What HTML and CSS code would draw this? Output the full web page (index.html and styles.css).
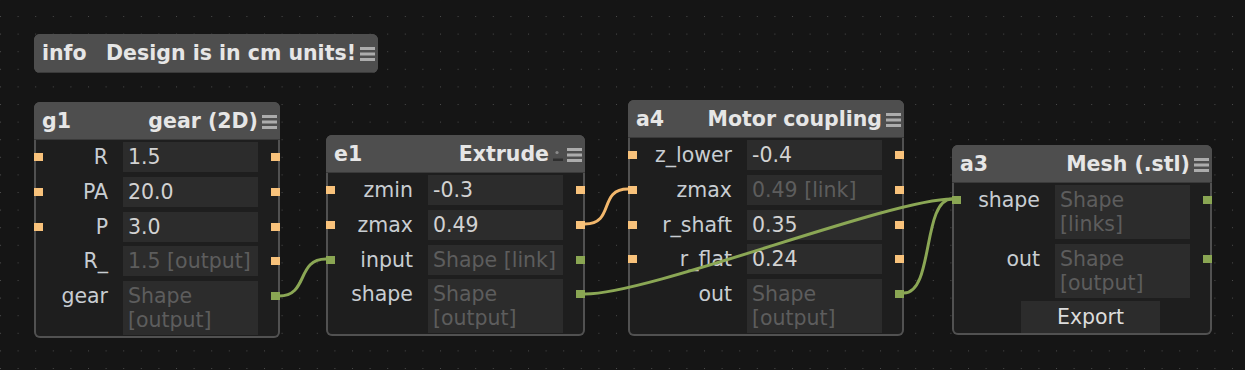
FILE: index.html
```html
<!DOCTYPE html>
<html lang="en">
<head>
    <meta charset="UTF-8">
    <title>Node editor</title>
    <link rel="stylesheet" href="styles.css">
</head>
<body>
    <div class="canvas">
        <svg class="grid" width="1245" height="370">
            <defs>
                <pattern id="dots" x="0" y="16" width="17.6" height="17.6" patternUnits="userSpaceOnUse">
                    <rect width="1" height="1" fill="#4a4a4a"/>
                </pattern>
            </defs>
            <rect width="1245" height="370" fill="url(#dots)" shape-rendering="crispEdges"/>
        </svg>

        <!-- info note -->
        <div class="node node-info">
            <div class="node-head">
                <span class="node-id">info</span>
                <span class="node-title">Design is in cm units!</span>
                <svg class="menu" width="15" height="14"><rect y="0" width="15" height="3"/><rect y="5.5" width="15" height="3"/><rect y="11" width="15" height="3"/></svg>
            </div>
        </div>

        <!-- gear -->
        <div class="node node-g1">
            <div class="node-head">
                <span class="node-id">g1</span>
                <span class="node-title">gear (2D)</span>
                <svg class="menu" width="15" height="14"><rect y="0" width="15" height="3"/><rect y="5.5" width="15" height="3"/><rect y="11" width="15" height="3"/></svg>
            </div>
            <div class="node-body">
                <div class="row"><span class="port num"></span><span class="label">R</span><span class="field">1.5</span><span class="port num"></span></div>
                <div class="row"><span class="port num"></span><span class="label">PA</span><span class="field">20.0</span><span class="port num"></span></div>
                <div class="row"><span class="port num"></span><span class="label">P</span><span class="field">3.0</span><span class="port num"></span></div>
                <div class="row"><span class="port none"></span><span class="label">R_</span><span class="field muted">1.5 [output]</span><span class="port num"></span></div>
                <div class="row"><span class="port none"></span><span class="label">gear</span><span class="field muted">Shape [output]</span><span class="port shape"></span></div>
            </div>
        </div>

        <!-- extrude -->
        <div class="node node-e1">
            <div class="node-head">
                <span class="node-id">e1</span>
                <span class="node-title">Extrude</span>
                <svg class="pin" width="10" height="14"><circle cx="4" cy="4.5" r="1.6" fill="#8a8a8a"/><rect x="0" y="10.5" width="10" height="2.5" fill="#2e2e2e"/></svg>
                <svg class="menu" width="15" height="14"><rect y="0" width="15" height="3"/><rect y="5.5" width="15" height="3"/><rect y="11" width="15" height="3"/></svg>
            </div>
            <div class="node-body">
                <div class="row"><span class="port num"></span><span class="label">zmin</span><span class="field">-0.3</span><span class="port num"></span></div>
                <div class="row"><span class="port num"></span><span class="label">zmax</span><span class="field">0.49</span><span class="port num"></span></div>
                <div class="row"><span class="port shape"></span><span class="label">input</span><span class="field muted">Shape [link]</span><span class="port shape"></span></div>
                <div class="row"><span class="port none"></span><span class="label">shape</span><span class="field muted">Shape [output]</span><span class="port shape"></span></div>
            </div>
        </div>

        <!-- motor coupling -->
        <div class="node node-a4">
            <div class="node-head">
                <span class="node-id">a4</span>
                <span class="node-title">Motor coupling</span>
                <svg class="menu" width="15" height="14"><rect y="0" width="15" height="3"/><rect y="5.5" width="15" height="3"/><rect y="11" width="15" height="3"/></svg>
            </div>
            <div class="node-body">
                <div class="row"><span class="port num"></span><span class="label">z_lower</span><span class="field">-0.4</span><span class="port num"></span></div>
                <div class="row"><span class="port num"></span><span class="label">zmax</span><span class="field muted">0.49 [link]</span><span class="port num"></span></div>
                <div class="row"><span class="port num"></span><span class="label">r_shaft</span><span class="field">0.35</span><span class="port num"></span></div>
                <div class="row"><span class="port num"></span><span class="label">r_flat</span><span class="field">0.24</span><span class="port num"></span></div>
                <div class="row"><span class="port none"></span><span class="label">out</span><span class="field muted">Shape [output]</span><span class="port shape"></span></div>
            </div>
        </div>

        <!-- mesh export -->
        <div class="node node-a3">
            <div class="node-head">
                <span class="node-id">a3</span>
                <span class="node-title">Mesh (.stl)</span>
                <svg class="menu" width="15" height="14"><rect y="0" width="15" height="3"/><rect y="5.5" width="15" height="3"/><rect y="11" width="15" height="3"/></svg>
            </div>
            <div class="node-body">
                <div class="row"><span class="port shape"></span><span class="label">shape</span><span class="field muted">Shape [links]</span><span class="port shape"></span></div>
                <div class="row"><span class="port none"></span><span class="label">out</span><span class="field muted">Shape [output]</span><span class="port shape"></span></div>
                <div class="export">Export</div>
            </div>
        </div>

        <svg class="wires" width="1245" height="370">
            <path class="wire green" d="M279,296 C309,296 296,259 326,259"/>
            <path class="wire orange" d="M585,224 C615,224 598,189 628,189"/>
            <path class="wire green" d="M585,294 C650,294 890,199 952,199"/>
            <path class="wire green" d="M904,293 C934,293 922,199 952,199"/>
        </svg>
    </div>
</body>
</html>
```

FILE: styles.css
```css
* {
    margin: 0;
    padding: 0;
    box-sizing: border-box;
}

body {
    background: #151515;
    font-family: 'DejaVu Sans', 'Liberation Sans', sans-serif;
    font-size: 20.5px;
    color: #c8cdd2;
    overflow: hidden;
}

.canvas {
    position: relative;
    width: 1245px;
    height: 370px;
}

.grid, .wires {
    position: absolute;
    left: 0;
    top: 0;
}

.wires {
    z-index: 2;
    pointer-events: none;
}

.wire {
    fill: none;
    stroke-width: 3;
}

.wire.green { stroke: #8ba755; }
.wire.orange { stroke: #f2b76c; }

/* nodes sit freely on the canvas */
.node {
    position: absolute;
    z-index: 1;
    background: #1e1e1e;
    border-radius: 6px;
    overflow: hidden;
    box-shadow: inset 0 0 0 2px #515151;
}

.node-info { left: 34px; top: 34px; width: 344px; }
.node-g1 { left: 34px; top: 102px; width: 246px; }
.node-e1 { left: 326px; top: 135px; width: 259px; }
.node-a4 { left: 628px; top: 100px; width: 276px; }
.node-a3 { left: 952px; top: 145px; width: 260px; }

.node-head {
    display: flex;
    align-items: center;
    height: 38px;
    padding: 0 3px 0 8px;
    background: #4e4e4e;
    border-bottom: 1px solid #3a3a3a;
    color: #e6e6e6;
    font-weight: bold;
    white-space: nowrap;
}

.node-info .node-head {
    height: 39px;
}

.node-title {
    margin-left: auto;
}

.menu {
    margin: 2px 0 0 4px;
    fill: #acacac;
    flex-shrink: 0;
}

.pin {
    margin: 2px 0 0 4px;
    flex-shrink: 0;
}

.node-body {
    display: flex;
    flex-direction: column;
    gap: 4.75px;
    padding: 2px 0 3px;
}

.row {
    display: flex;
    align-items: flex-start;
}

.port {
    width: 9px;
    height: 8px;
    margin-top: 11px;
    flex-shrink: 0;
}

.port.num { background: #f8c27b; }
.port.shape { background: #8aa653; }
.port.none { visibility: hidden; }

.row .port:last-child {
    margin-left: 13px;
}

.label {
    flex: 1;
    text-align: right;
    padding: 3px 15px 0 0;
    line-height: 24px;
    white-space: nowrap;
}

.field {
    width: 135px;
    padding: 3px 4px 3px 5px;
    line-height: 24px;
    background: #2c2c2c;
    color: #d2d2d2;
}

.field.muted {
    color: #5d5d5d;
}

.export {
    width: 139px;
    height: 32px;
    margin: -2px 0 0 69px;
    line-height: 32px;
    text-align: center;
    background: #2c2c2c;
    color: #dcdcdc;
}

.node-a3 .node-body {
    padding-bottom: 2px;
}
```
